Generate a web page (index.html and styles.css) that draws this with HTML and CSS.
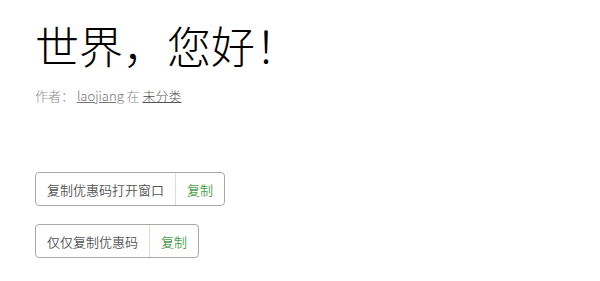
FILE: index.html
```
<!DOCTYPE html>
<html lang="zh">
<head>
<meta charset="utf-8">
<link rel="stylesheet" href="styles.css">
</head>
<body>
<div class="page">
  <h1 class="title">世界，您好！</h1>
  <div class="meta">作者： <a class="link" href="#">laojiang</a> 在 <a class="link cat" href="#">未分类</a></div>
  <div class="coupons">
    <div class="coupon">
      <span class="label">复制优惠码打开窗口</span>
      <span class="action">复制</span>
    </div>
    <div class="coupon">
      <span class="label">仅仅复制优惠码</span>
      <span class="action">复制</span>
    </div>
  </div>
</div>
</body>
</html>
```
FILE: styles.css
```
html, body {
  margin: 0;
  padding: 0;
  background: #fff;
}
.page {
  padding: 14px 0 0 35px;
  font-family: "Noto Sans CJK SC", "Noto Sans", sans-serif;
  font-weight: 300;
}
.title {
  margin: 0;
  font-size: 44px;
  font-weight: 300;
  line-height: 62px;
  color: #000;
}
.meta {
  margin-top: 10px;
  font-size: 13px;
  line-height: 20px;
  color: #8a8a8a;
}
.link {
  color: #777;
  text-decoration: underline;
}
.cat {
  color: #555;
}
.coupons {
  margin-top: 66px;
  display: flex;
  flex-direction: column;
  align-items: flex-start;
  gap: 18px;
}
.coupon {
  display: flex;
  height: 34px;
  box-sizing: border-box;
  border: 1px solid #a8a8a8;
  border-radius: 4px;
  font-size: 13px;
  font-weight: 350;
  align-items: stretch;
}
.label, .action {
  display: flex;
  align-items: center;
  padding: 0 11px;
}
.label {
  color: #555;
  border-right: 1px solid #cfe6cf;
}
.action {
  color: #4a9e4a;
  padding: 0 11px;
}
```
